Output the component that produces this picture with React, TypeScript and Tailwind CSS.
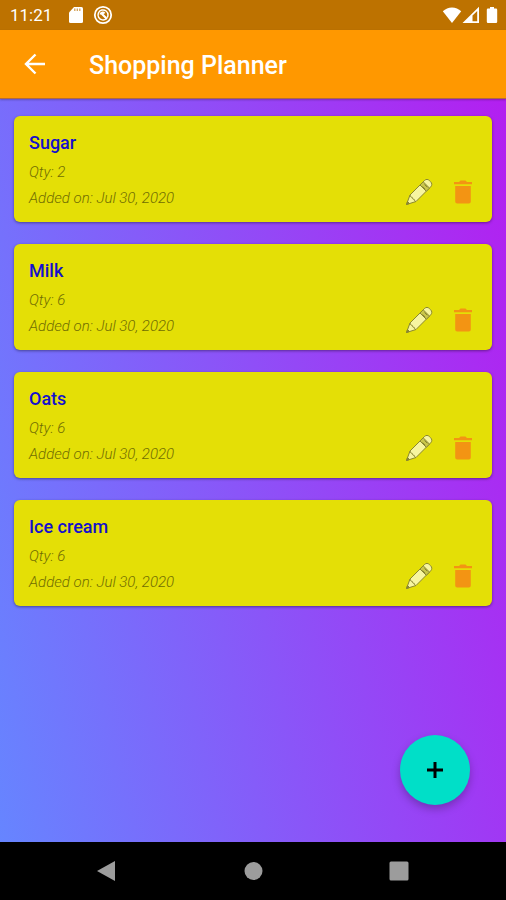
import React from "react";

type Item = { name: string; qty: number; added: string };

const items: Item[] = [
  { name: "Sugar", qty: 2, added: "Jul 30, 2020" },
  { name: "Milk", qty: 6, added: "Jul 30, 2020" },
  { name: "Oats", qty: 6, added: "Jul 30, 2020" },
  { name: "Ice cream", qty: 6, added: "Jul 30, 2020" },
];

function StatusBar() {
  return (
    <div className="flex h-[30px] items-center justify-between bg-[#bd7200] pr-2 pl-[10px] text-white">
      <div className="flex items-center">
        <span className="w-[58px] text-[17px] leading-5">11:21</span>
        <svg viewBox="0 0 16 18" className="h-[18px] w-4" fill="currentColor" aria-hidden="true">
          <path d="M6 1h7.500a1.500 1.500 0 0 1 1.500 1.500v13a1.500 1.500 0 0 1-1.500 1.500h-11a1.500 1.500 0 0 1-1.500-1.500V6.500z" />
          <path d="M6.800 2.500v2.500M9.300 2.500v2.500M11.800 2.500v2.500" stroke="#bd7200" strokeWidth="1.200" opacity=".7" />
        </svg>
        <svg viewBox="0 0 20 20" className="ml-[9px] size-5" fill="none" stroke="currentColor" aria-hidden="true">
          <circle cx="10" cy="10" r="8.200" strokeWidth="1.800" />
          <path d="M13.500 13.500A5 5 0 1 1 15 10c0 1-.300 1.800-.800 2.600" strokeWidth="1.500" />
          <path d="M7.500 9.500c.500-2 3-2.500 4-1M9 9l5 5" strokeWidth="2.200" />
        </svg>
      </div>
      <div className="flex items-center">
        <svg viewBox="0 0 20 18" className="h-[18px] w-5" fill="currentColor" aria-hidden="true">
          <path d="M10 17 .800 5.300C3.400 2.800 6.500 1.500 10 1.500s6.600 1.300 9.200 3.800z" />
        </svg>
        <svg viewBox="0 0 18 18" className="h-[18px] w-[18px]" fill="currentColor" aria-hidden="true">
          <path fillRule="evenodd" d="M.500 17 17 .800V17zM10.500 9.500V15.200H15.200V5z" />
        </svg>
        <svg viewBox="0 0 12 18" className="ml-1.5 h-[18px] w-3" fill="currentColor" aria-hidden="true">
          <path d="M4 1h4v1.500h2a1.200 1.200 0 0 1 1.200 1.200v12A1.300 1.300 0 0 1 10 17H2a1.300 1.300 0 0 1-1.200-1.300v-12A1.200 1.200 0 0 1 2 2.500h2z" />
        </svg>
      </div>
    </div>
  );
}

function PencilIcon() {
  return (
    <svg viewBox="0 0 28 28" className="size-7" stroke="#8a8730" strokeWidth="1" strokeLinejoin="round" aria-hidden="true">
      <path d="M1.500 26.500 5 17 19.500 2.500c1.500-1.500 3.500-1.500 5.200.3l.8.800c1.700 1.700 1.700 3.700.2 5.200L11 23.500z" fill="#f7f5a0" />
      <path d="m15 7 6.300 6.300 3.200-3.200-6.300-6.300z" fill="#c9c64a" />
      <path d="m17.500 8.500 2.800 2.800M19.500 6.500l2.800 2.800" fill="none" />
      <path d="M5 17c.300 1.600 1 2.300 2.200 2.300 0 1.300.6 2 1.900 1.900 0 1.300.7 2 1.900 2.300" fill="none" />
      <path d="m1.500 26.500 1-3 2 2z" fill="#8a8730" />
    </svg>
  );
}

function TrashIcon() {
  return (
    <svg viewBox="0 0 20 26" className="h-[26px] w-5" fill="#f39413" aria-hidden="true">
      <path d="M1 3h5l1.500-1.500h5L14 3h5v2.200H1zM2.200 7h15.600v15.500a2 2 0 0 1-2 2H4.200a2 2 0 0 1-2-2z" />
    </svg>
  );
}

function ItemCard({ name, qty, added }: Item) {
  return (
    <li className="flex items-end justify-between rounded-md bg-[#e4df06] pt-[13px] pr-[19px] pb-[11px] pl-[15px] shadow-[0_1px_3px_rgba(0,0,0,0.4)]">
      <div>
        <h2 className="mb-0.5 text-[18px] leading-7 font-medium text-[#1410cc]">{name}</h2>
        <p className="text-[15px] leading-[26px] font-light text-[#706d02] italic">Qty: {qty}</p>
        <p className="text-[15px] leading-[26px] font-light text-[#706d02] italic">Added on: {added}</p>
      </div>
      <div className="flex items-center gap-5 pb-[5px]">
        <button type="button" aria-label={"Edit " + name}>
          <PencilIcon />
        </button>
        <button type="button" aria-label={"Delete " + name}>
          <TrashIcon />
        </button>
      </div>
    </li>
  );
}

export default function App() {
  return (
    <div className="flex min-h-screen flex-col bg-black font-[Roboto,'Noto_Sans',sans-serif]">
      <StatusBar />
      <header className="z-10 flex h-[69px] items-center border-b border-[#b06a40] bg-[#ff9800] pl-[22px] text-white shadow-[0_1px_2px_rgba(0,0,0,0.25)]">
        <button type="button" aria-label="Back" className="mr-[41px]">
          <svg viewBox="0 0 26 26" className="size-[26px]" fill="none" stroke="currentColor" strokeWidth="2.400" aria-hidden="true">
            <path d="M23 13H4.500M13.500 3.500 4 13l9.500 9.500" />
          </svg>
        </button>
        <h1 className="pt-1 text-[25px] leading-8 font-medium">Shopping Planner</h1>
      </header>
      <main className="relative grow bg-[linear-gradient(78deg,#6685ff,#b31ff0)] px-[14px] pt-[17px]">
        <ul className="flex flex-col gap-[22px]">
          {items.map((item) => (
            <ItemCard key={item.name} {...item} />
          ))}
        </ul>
        <button
          type="button"
          aria-label="Add item"
          className="absolute right-9 bottom-[37px] flex size-[70px] items-center justify-center rounded-full bg-[#00dfc8] shadow-[0_4px_8px_rgba(0,0,0,0.25)]"
        >
          <svg viewBox="0 0 18 18" className="size-[18px]" stroke="#000" strokeWidth="3" aria-hidden="true">
            <path d="M9 1v16M1 9h16" />
          </svg>
        </button>
      </main>
      <nav aria-label="System" className="flex h-[58px] items-center justify-center gap-[126px] bg-black text-[#9c9c9c]">
        <button type="button" aria-label="System back">
          <svg viewBox="0 0 20 22" className="h-[22px] w-5" fill="currentColor" aria-hidden="true">
            <path d="M18 1v20L0 11z" />
          </svg>
        </button>
        <button type="button" aria-label="Home">
          <svg viewBox="0 0 20 20" className="size-5" fill="currentColor" aria-hidden="true">
            <circle cx="10.500" cy="10" r="9" />
          </svg>
        </button>
        <button type="button" aria-label="Recent apps">
          <svg viewBox="0 0 20 20" className="size-5" fill="currentColor" aria-hidden="true">
            <rect x=".500" y=".500" width="19" height="19" rx="1.500" />
          </svg>
        </button>
      </nav>
    </div>
  );
}
